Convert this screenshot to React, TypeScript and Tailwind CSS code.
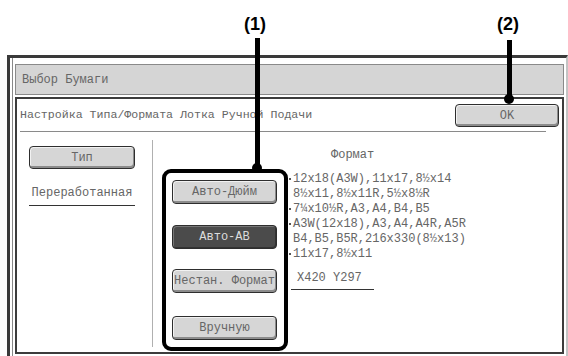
import clsx from 'clsx';

function Btn({ label, dark, className }: { label: string; dark?: boolean; className?: string }) {
  return (
    <div
      className={clsx(
        'flex items-center justify-center h-[24px] w-[105px] rounded-[4px] border border-[#2e2e2e] text-[12px] whitespace-nowrap overflow-visible',
        dark
          ? 'bg-[#4b4b4b] text-[#dcdcdc] shadow-[inset_-1px_-1px_0_#333,inset_1px_1px_0_#777]'
          : 'bg-[#d6d6d6] text-[#666] shadow-[inset_-1px_-2px_0_#8c8c8c,inset_1px_1px_0_#f2f2f2]',
        className
      )}
    >
      {label}
    </div>
  );
}

const sizes = [
  { bullet: true, text: '12x18(A3W),11x17,8½x14' },
  { bullet: false, text: '8½x11,8½x11R,5½x8½R' },
  { bullet: true, text: '7¼x10½R,A3,A4,B4,B5' },
  { bullet: true, text: 'A3W(12x18),A3,A4,A4R,A5R' },
  { bullet: false, text: 'B4,B5,B5R,216x330(8½x13)' },
  { bullet: true, text: '11x17,8½x11' },
];

export default function App() {
  return (
    <div className="relative w-[568px] h-[356px] overflow-hidden bg-white font-['Liberation_Mono',monospace] text-[#666]">
      {/* window frame */}
      <div className="pt-[55px] pl-[7px]">
        <div className="h-[303px] border-l-[3px] border-t-[3px] border-r-2 border-[#3a3a3a] border-r-[#c4c4c4] pl-[5px] pt-[6px] pr-[2px] shadow-[inset_2px_0_0_#fff,inset_3px_0_0_#888]">
          <div className="h-[31px] bg-[#d5d5d5] border border-[#8a8a8a] flex items-center pl-[6px] text-[12px]">
            Выбор Бумаги
          </div>

          <div className="mt-[2px] h-[257px] border-2 border-[#3c3c3c] bg-white flex flex-col">
            {/* header */}
            <div className="flex items-start justify-between pl-[3px] pr-[3px] pt-[5px]">
              <span className="mt-[3px] leading-[16px] text-[11.6px] whitespace-nowrap">
                Настройка Типа/Формата Лотка Ручной Подачи
              </span>
              <div className="flex items-center justify-center h-[23px] w-[104px] rounded-[4px] border border-[#2e2e2e] bg-[#d6d6d6] text-[12px] shadow-[inset_-1px_-2px_0_#8c8c8c,inset_1px_1px_0_#f2f2f2]">
                OK
              </div>
            </div>
            <div className="mt-[4px] ml-[3px] mr-[16px] h-px bg-[#8a8a8a]" />

            {/* body */}
            <div className="flex flex-1">
              {/* type column */}
              <div className="mt-[8px] h-[207px] w-[136px] border-r border-[#b0b0b0] pl-[12px] pt-[6px]">
                <div className="flex items-center justify-center h-[23px] w-[106px] rounded-[4px] border border-[#2e2e2e] bg-[#d6d6d6] text-[12px] shadow-[inset_-1px_-2px_0_#8c8c8c,inset_1px_1px_0_#f2f2f2]">
                  Тип
                </div>
                <div className="mt-[17px] w-[106px] pb-[5px] border-b border-[#333] text-center leading-[14px] text-[12px]">
                  Переработанная
                </div>
              </div>

              {/* highlighted format buttons (1) */}
              <div className="ml-[9px] mt-[37px] h-[182px] w-[126px] border-4 border-black rounded-[9px] pl-[6px] pt-[7px]">
                <Btn label="Авто-Дюйм" />
                <Btn label="Авто-AB" dark className="mt-[21px]" />
                <Btn label="Нестан. Формат" className="mt-[20px]" />
                <Btn label="Вручную" className="mt-[23px]" />
              </div>

              {/* size list */}
              <div className="pl-px text-[12px]">
                <div className="mt-[16px] pl-[42px] leading-[14px]">Формат</div>
                <div className="mt-[9px]">
                  {sizes.map((s, i) => (
                    <div key={i} className="flex items-center h-[15px] whitespace-nowrap">
                      <span className="w-[4px] flex">
                        {s.bullet && <span className="w-[2px] h-[2px] bg-[#555]" />}
                      </span>
                      <span>{s.text}</span>
                    </div>
                  ))}
                </div>
                <div className="mt-[10px] ml-[2px] w-[83px] pl-[6px] pb-[4px] border-b border-[#333] leading-[14px]">
                  X420 Y297
                </div>
              </div>
            </div>
          </div>
        </div>
      </div>

      {/* callouts */}
      <div className="absolute left-[244px] top-[15px] font-['Liberation_Sans',Arial,sans-serif] font-bold text-[18px] leading-none text-black">
        (1)
      </div>
      <div className="absolute left-[255px] top-[38px] w-[5px] h-[130px] bg-black" />
      <div className="absolute left-[252px] top-[163px] w-[10px] h-[10px] rounded-full bg-black" />

      <div className="absolute left-[497px] top-[15px] font-['Liberation_Sans',Arial,sans-serif] font-bold text-[18px] leading-none text-black">
        (2)
      </div>
      <div className="absolute left-[507px] top-[40px] w-[5px] h-[58px] bg-black" />
      <div className="absolute left-[504px] top-[94px] w-[10px] h-[10px] rounded-full bg-black" />
    </div>
  );
}
